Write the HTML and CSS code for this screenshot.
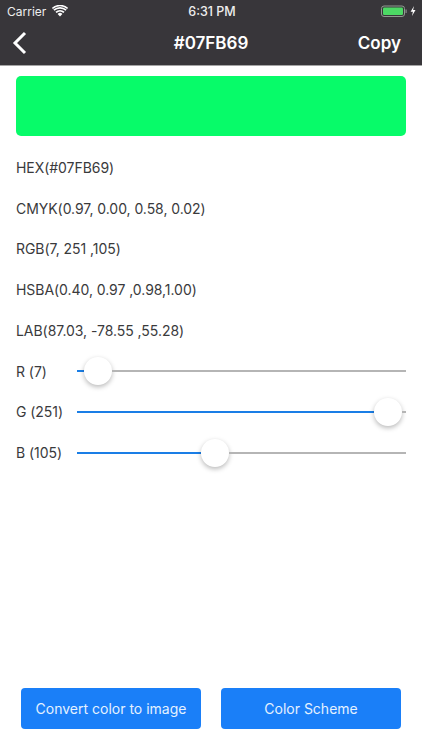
FILE: index.html
```html
<!DOCTYPE html>
<html lang="en">
<head>
<meta charset="utf-8">
<title>#07FB69</title>
<link rel="stylesheet" href="styles.css">
</head>
<body>
<div class="app">
  <header class="header">
    <div class="status">
      <div class="status-left">
        <span>Carrier</span>
        <svg class="wifi" width="16" height="12" viewBox="0 0 16 12"><path d="M8 11.6 5.6 8.9a3.6 3.6 0 0 1 4.8 0Z" fill="#fff"/><path d="M1.9 5.2a9 9 0 0 1 12.2 0M4 7.4a6 6 0 0 1 8 0" fill="none" stroke="#fff" stroke-width="1.7"/><path d="M.4 3.4a11.4 11.4 0 0 1 15.2 0" fill="none" stroke="#fff" stroke-width="1.5"/></svg>
      </div>
      <div class="status-time">6:31 PM</div>
      <div class="status-right">
        <svg width="36" height="12" viewBox="0 0 36 12"><rect x=".5" y="1" width="23" height="10.5" rx="2.5" fill="none" stroke="#8f9a8f"/><rect x="2" y="2.5" width="20" height="7.5" rx="1.2" fill="#4cd964"/><rect x="24.5" y="4.5" width="1.2" height="3.5" fill="#8a8a8a"/><path d="M33 1 29.6 6.8h2.3L31 11l3.5-6h-2.4Z" fill="#fff"/></svg>
      </div>
    </div>
    <nav class="nav">
      <svg class="back" width="16" height="24" viewBox="0 0 16 24"><path d="M13 2 3 12l10 10" fill="none" stroke="#fff" stroke-width="3"/></svg>
      <div class="title">#07FB69</div>
      <div class="copy">Copy</div>
    </nav>
  </header>
  <main class="content">
    <div class="swatch"></div>
    <div class="row">HEX(#07FB69)</div>
    <div class="row">CMYK(0.97, 0.00, 0.58, 0.02)</div>
    <div class="row">RGB(7, 251 ,105)</div>
    <div class="row">HSBA(0.40, 0.97 ,0.98,1.00)</div>
    <div class="row">LAB(87.03, -78.55 ,55.28)</div>
    <div class="row slider-row">
      <span class="label">R (7)</span>
      <div class="track"><div class="fill" style="width:7px"></div><div class="thumb"></div><div class="rest"></div></div>
    </div>
    <div class="row slider-row">
      <span class="label">G (251)</span>
      <div class="track"><div class="fill" style="width:297px"></div><div class="thumb"></div><div class="rest"></div></div>
    </div>
    <div class="row slider-row">
      <span class="label">B (105)</span>
      <div class="track"><div class="fill" style="width:124px"></div><div class="thumb"></div><div class="rest"></div></div>
    </div>
  </main>
  <footer class="actions">
    <button class="btn">Convert color to image</button>
    <button class="btn">Color Scheme</button>
  </footer>
</div>
</body>
</html>
```
FILE: styles.css
```css
* { box-sizing: border-box; }
html, body { margin: 0; padding: 0; background: #fff; }
body { font-family: Inter, "Liberation Sans", sans-serif; color: #3a3a3c; }
.app { width: 422px; height: 750px; display: flex; flex-direction: column; overflow: hidden; }
.header { background: #38363a; color: #fff; height: 66px; border-bottom: 1px solid #a5a5a5; flex: none; }
.status { height: 21px; padding: 1px 5px 0 7px; display: grid; grid-template-columns: 1fr auto 1fr; align-items: center; font-size: 12px; color: #eee; }
.status-left { display: flex; align-items: center; gap: 6px; }
.status-time { font-weight: 500; font-size: 12.5px; }
.status-right { display: flex; justify-content: flex-end; }
.nav { height: 44px; display: grid; grid-template-columns: 1fr auto 1fr; align-items: center; padding: 0 21px; }
.back { display: block; margin-left: -9px; }
.title { font-size: 17px; font-weight: 600; }
.copy { justify-self: end; font-size: 17px; font-weight: 600; }
.content { flex: 1; padding: 10px 16px 0; }
.swatch { height: 60px; border-radius: 5px; background: #07fb69; margin-bottom: 11px; }
.row { height: 40.7px; display: flex; align-items: center; font-size: 14px; letter-spacing: -.05px; }
.slider-row { padding-top: 1px; }
.label { width: 61px; flex: none; }
.track { flex: 1; display: flex; align-items: center; }
.fill { height: 2px; background: #1a7ee6; flex: none; }
.rest { height: 2px; background: #b5b5b5; flex: 1; }
.thumb { width: 28px; height: 28px; border-radius: 50%; background: #fff; box-shadow: 0 2px 5px rgba(0,0,0,.28); flex: none; }
.actions { flex: none; display: flex; gap: 20px; padding: 0 21px 21px; }
.btn { width: 180px; height: 41px; border: 0; border-radius: 4px; background: #1a7ff8; color: #e4f1ff; font: 400 14px Inter, "Liberation Sans", sans-serif; }
```
